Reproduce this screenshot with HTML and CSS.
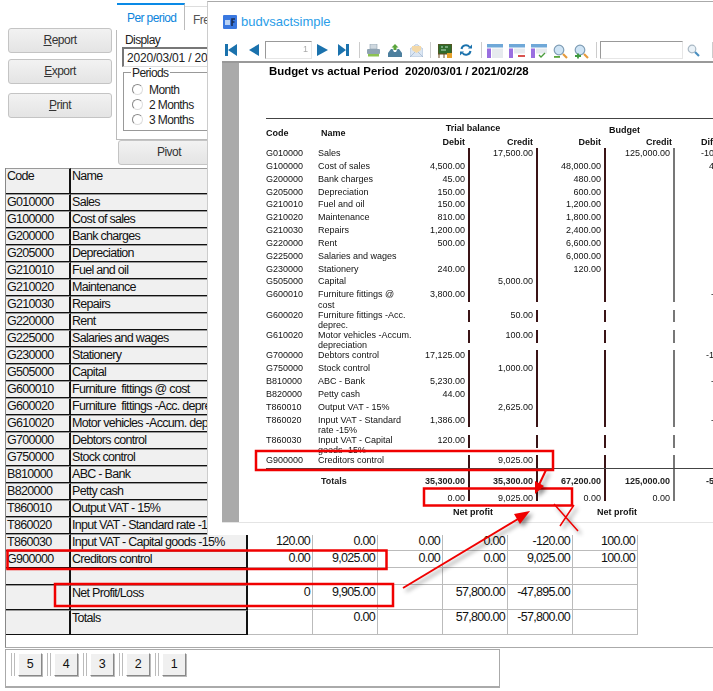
FILE: index.html
```html
<!DOCTYPE html>
<html lang="en">
<head>
    <meta charset="UTF-8">
    <title>Budget vs actual</title>
    <link rel="stylesheet" href="styles.css">
</head>
<body>
    <div class="top">
        <div class="side">
            <button class="btn"><u>R</u>eport</button>
            <button class="btn"><u>E</u>xport</button>
            <button class="btn btn-print"><u>P</u>rint</button>
        </div>
        <div class="tabs">
            <div class="tabrow">
                <div class="tab active">Per period</div>
                <div class="tab">Free</div>
            </div>
            <div class="panel">
                <div class="lbl">Display</div>
                <div class="field">2020/03/01 / 2021/02/28</div>
                <div class="group">
                    <div class="legend">Periods</div>
                    <div class="opt"><span class="radio"></span>Month</div>
                    <div class="opt"><span class="radio"></span>2 Months</div>
                    <div class="opt"><span class="radio"></span>3 Months</div>
                </div>
            </div>
            <button class="btn btn-pivot">Pivot</button>
        </div>
    </div>

    <div class="gridwrap">
        <table class="grid">
            <colgroup>
                <col class="c-code"><col class="c-name"><col class="c-num"><col class="c-num"><col class="c-num"><col class="c-num"><col class="c-num"><col class="c-num">
            </colgroup>
            <tr class="head"><th>Code</th><th>Name</th></tr>
            <tr><th>G010000</th><th>Sales</th></tr>
            <tr><th>G100000</th><th>Cost of sales</th></tr>
            <tr><th>G200000</th><th>Bank charges</th></tr>
            <tr><th>G205000</th><th>Depreciation</th></tr>
            <tr><th>G210010</th><th>Fuel and oil</th></tr>
            <tr><th>G210020</th><th>Maintenance</th></tr>
            <tr><th>G210030</th><th>Repairs</th></tr>
            <tr><th>G220000</th><th>Rent</th></tr>
            <tr><th>G225000</th><th>Salaries and wages</th></tr>
            <tr><th>G230000</th><th>Stationery</th></tr>
            <tr><th>G505000</th><th>Capital</th></tr>
            <tr><th>G600010</th><th>Furniture&nbsp; fittings @ cost</th></tr>
            <tr><th>G600020</th><th>Furniture&nbsp; fittings -Acc. deprec.</th></tr>
            <tr><th>G610020</th><th>Motor vehicles -Accum. depreciation</th></tr>
            <tr><th>G700000</th><th>Debtors control</th></tr>
            <tr><th>G750000</th><th>Stock control</th></tr>
            <tr><th>B810000</th><th>ABC - Bank</th></tr>
            <tr><th>B820000</th><th>Petty cash</th></tr>
            <tr><th>T860010</th><th>Output VAT - 15%</th></tr>
            <tr><th>T860020</th><th>Input VAT - Standard rate -15%</th></tr>
            <tr><th>T860030</th><th>Input VAT - Capital goods -15%</th><td>120.00</td><td>0.00</td><td>0.00</td><td>0.00</td><td>-120.00</td><td>100.00</td></tr>
            <tr><th>G900000</th><th>Creditors control</th><td>0.00</td><td>9,025.00</td><td>0.00</td><td>0.00</td><td>9,025.00</td><td>100.00</td></tr>
            <tr><th></th><th></th><td></td><td></td><td></td><td></td><td></td><td></td></tr>
            <tr class="tall"><th></th><th>Net Profit/Loss</th><td>0</td><td>9,905.00</td><td></td><td>57,800.00</td><td>-47,895.00</td><td></td></tr>
            <tr class="tall"><th></th><th>Totals</th><td></td><td>0.00</td><td></td><td>57,800.00</td><td>-57,800.00</td><td></td></tr>
        </table>
    </div>

    <div class="pager">
        <div class="pagebtn">5</div>
        <div class="pagebtn">4</div>
        <div class="pagebtn">3</div>
        <div class="pagebtn">2</div>
        <div class="pagebtn">1</div>
    </div>

    <!-- report preview window -->
    <div class="win">
        <div class="wintitle">
            <svg width="14" height="14" viewBox="0 0 14 14"><rect width="14" height="14" rx="1" fill="#3a78e0"/><rect x="2" y="5" width="5" height="5" fill="#b9d2f5"/><path d="M9 11V4h3M9 7h2.500" stroke="#1c2f55" stroke-width="1.600" fill="none"/></svg>
            <span>budvsactsimple</span>
        </div>
        <div class="tools">
            <svg class="ic first" width="12" height="12" viewBox="0 0 12 12"><path d="M0 0h3v12H0zM3 6l9-6v12z" fill="#1b72ad"/></svg>
            <svg class="ic prev" width="10" height="12" viewBox="0 0 10 12"><path d="M0 6l10-6v12z" fill="#1b72ad"/></svg>
            <div class="pageno">1</div>
            <svg class="ic next" width="11" height="12" viewBox="0 0 11 12"><path d="M11 6L0 0v12z" fill="#1b72ad"/></svg>
            <svg class="ic last" width="11" height="12" viewBox="0 0 11 12"><path d="M11 0H8v12h3zM8 6L0 0v12z" fill="#1b72ad"/></svg>
            <i class="sep s1"></i>
            <svg class="ic print" width="13" height="13" viewBox="0 0 13 13"><rect x="3" y="0" width="7" height="5" fill="#cfd8df" stroke="#8fa3b2" stroke-width=".6"/><rect x="0" y="5" width="13" height="5" rx="1" fill="#8fa3b2"/><rect x="1" y="10" width="11" height="2.500" fill="#8cc152"/></svg>
            <svg class="ic save" width="14" height="13" viewBox="0 0 14 13"><path d="M7 0l3.500 3.500H8.500V6h-3V3.500H3.500z" fill="#5aa53c"/><path d="M3 5L0 9v4h14V9l-3-4H9.500L8 8H6L4.500 5z" fill="#4d7f9e"/></svg>
            <svg class="ic mail" width="13" height="13" viewBox="0 0 13 13"><path d="M0 5l6.500-5L13 5v8H0z" fill="#dbe6f3" stroke="#9db2cc" stroke-width=".6"/><path d="M2 2h9v4l-4.500 3L2 6z" fill="#f4d9a8"/><path d="M0 13l5-5M13 13L8 8" stroke="#9db2cc" stroke-width=".7"/></svg>
            <i class="sep s2"></i>
            <svg class="ic board" width="14" height="14" viewBox="0 0 14 14"><rect y="0" width="14" height="10" fill="#2f6b2c" stroke="#6b4a1e"/><path d="M3 3h2M7 3h3M3 6h5" stroke="#dfe" stroke-width=".8"/><path d="M1 10v4M6 10v4" stroke="#6b4a1e"/><rect x="9" y="9" width="5" height="5" fill="#e5a12c"/></svg>
            <svg class="ic refresh" width="12" height="12" viewBox="0 0 12 12"><path d="M1.500 5A4.500 4.500 0 0 1 9.500 3M10.500 7A4.500 4.500 0 0 1 2.500 9" stroke="#1b72ad" stroke-width="2" fill="none"/><path d="M8 4.500h4V.500zM4 7.500H0v4z" fill="#1b72ad"/></svg>
            <i class="sep s3"></i>
            <svg class="ic t1" width="16" height="14" viewBox="0 0 16 14"><rect width="16" height="3.500" fill="#6fa8d8"/><rect y="4.500" width="4" height="9.500" fill="#9a6fe0"/><rect x="5" y="4.500" width="11" height="9.500" fill="#e6eaee"/></svg>
            <svg class="ic t2" width="16" height="14" viewBox="0 0 16 14"><rect width="16" height="3.500" fill="#6fa8d8"/><rect y="4.500" width="4" height="9.500" fill="#9a6fe0"/><rect x="5" y="4.500" width="11" height="5" fill="#e6eaee"/><rect x="9" y="11" width="7" height="2" fill="#d9534f"/></svg>
            <svg class="ic t3" width="16" height="14" viewBox="0 0 16 14"><rect width="16" height="3.500" fill="#6fa8d8"/><rect y="4.500" width="4" height="9.500" fill="#9a6fe0"/><rect x="5" y="4.500" width="11" height="5" fill="#e6eaee"/><path d="M8 11l2 2 4-4" stroke="#4a9c3c" stroke-width="1.300" fill="none"/></svg>
            <svg class="ic z1" width="15" height="15" viewBox="0 0 15 15"><circle cx="6" cy="6" r="4.800" fill="#cfe4f5" stroke="#7f9db5" stroke-width="1.200"/><path d="M10 10l4 4" stroke="#e59a3c" stroke-width="2.200"/><rect x="1" y="12" width="6" height="1.800" fill="#5aa53c"/></svg>
            <svg class="ic z2" width="15" height="15" viewBox="0 0 15 15"><circle cx="6" cy="6" r="4.800" fill="#cfe4f5" stroke="#7f9db5" stroke-width="1.200"/><path d="M10 10l4 4" stroke="#e59a3c" stroke-width="2.200"/><path d="M1 12h6M4 9.500v5" stroke="#3f9a3f" stroke-width="1.800"/></svg>
            <i class="sep s4"></i>
            <div class="searchbox"></div>
            <svg class="ic look" width="13" height="13" viewBox="0 0 13 13"><circle cx="5" cy="5" r="3.800" fill="#eaf2f8" stroke="#a9b8c4" stroke-width="1.200"/><path d="M8 8l4 4" stroke="#4a8fc0" stroke-width="2.200"/></svg>
            <i class="sep s5"></i>
        </div>
        <div class="preview">
            <div class="rail"></div>
            <div class="page">
                <div class="rtitle">Budget vs actual Period&nbsp; 2020/03/01 / 2021/02/28</div>
                <div class="rhead">
                    <b class="hcode">Code</b>
                    <b class="hname">Name</b>
                    <b class="htrial">Trial balance</b>
                    <b class="hbud">Budget</b>
                    <b class="hd hd1">Debit</b>
                    <b class="hd hd2">Credit</b>
                    <b class="hd hd3">Debit</b>
                    <b class="hd hd4">Credit</b>
                    <b class="hdiff">Difference</b>
                </div>
                <div class="rr"><span>G010000</span><span>Sales</span><span class="am"></span><span class="am">17,500.00</span><span class="am"></span><span class="am">125,000.00</span><span class="df">-107,500.00</span></div>
                <div class="rr"><span>G100000</span><span>Cost of sales</span><span class="am">4,500.00</span><span class="am"></span><span class="am">48,000.00</span><span class="am"></span><span class="df">43,500.00</span></div>
                <div class="rr"><span>G200000</span><span>Bank charges</span><span class="am">45.00</span><span class="am"></span><span class="am">480.00</span><span class="am"></span><span class="df">435.00</span></div>
                <div class="rr"><span>G205000</span><span>Depreciation</span><span class="am">150.00</span><span class="am"></span><span class="am">600.00</span><span class="am"></span><span class="df">450.00</span></div>
                <div class="rr"><span>G210010</span><span>Fuel and oil</span><span class="am">150.00</span><span class="am"></span><span class="am">1,200.00</span><span class="am"></span><span class="df">1,050.00</span></div>
                <div class="rr"><span>G210020</span><span>Maintenance</span><span class="am">810.00</span><span class="am"></span><span class="am">1,800.00</span><span class="am"></span><span class="df">990.00</span></div>
                <div class="rr"><span>G210030</span><span>Repairs</span><span class="am">1,200.00</span><span class="am"></span><span class="am">2,400.00</span><span class="am"></span><span class="df">1,200.00</span></div>
                <div class="rr"><span>G220000</span><span>Rent</span><span class="am">500.00</span><span class="am"></span><span class="am">6,600.00</span><span class="am"></span><span class="df warn">6,100.00</span></div>
                <div class="rr"><span>G225000</span><span>Salaries and wages</span><span class="am"></span><span class="am"></span><span class="am">6,000.00</span><span class="am"></span><span class="df warn">6,000.00</span></div>
                <div class="rr"><span>G230000</span><span>Stationery</span><span class="am">240.00</span><span class="am"></span><span class="am">120.00</span><span class="am"></span><span class="df">-120.00</span></div>
                <div class="rr"><span>G505000</span><span>Capital</span><span class="am"></span><span class="am">5,000.00</span><span class="am"></span><span class="am"></span><span class="df warn">5,000.00</span></div>
                <div class="rr"><span>G600010</span><span>Furniture fittings @<br>cost</span><span class="am">3,800.00</span><span class="am"></span><span class="am"></span><span class="am"></span><span class="df">-3,800.00</span></div>
                <div class="rr brk"><span>G600020</span><span>Furniture fittings -Acc.<br>deprec.</span><span class="am"></span><span class="am">50.00</span><span class="am"></span><span class="am"></span><span class="df"></span></div>
                <div class="rr brk"><span>G610020</span><span>Motor vehicles -Accum.<br>depreciation</span><span class="am"></span><span class="am">100.00</span><span class="am"></span><span class="am"></span><span class="df"></span></div>
                <div class="rr brk"><span>G700000</span><span>Debtors control</span><span class="am">17,125.00</span><span class="am"></span><span class="am"></span><span class="am"></span><span class="df">-17,125.00</span></div>
                <div class="rr"><span>G750000</span><span>Stock control</span><span class="am"></span><span class="am">1,000.00</span><span class="am"></span><span class="am"></span><span class="df"></span></div>
                <div class="rr"><span>B810000</span><span>ABC - Bank</span><span class="am">5,230.00</span><span class="am"></span><span class="am"></span><span class="am"></span><span class="df">-5,230.00</span></div>
                <div class="rr"><span>B820000</span><span>Petty cash</span><span class="am">44.00</span><span class="am"></span><span class="am"></span><span class="am"></span><span class="df"></span></div>
                <div class="rr"><span>T860010</span><span>Output VAT - 15%</span><span class="am"></span><span class="am">2,625.00</span><span class="am"></span><span class="am"></span><span class="df warn">2,625.00</span></div>
                <div class="rr"><span>T860020</span><span>Input VAT - Standard<br>rate -15%</span><span class="am">1,386.00</span><span class="am"></span><span class="am"></span><span class="am"></span><span class="df">-1,386.00</span></div>
                <div class="rr brk"><span>T860030</span><span>Input VAT - Capital<br>goods -15%</span><span class="am">120.00</span><span class="am"></span><span class="am"></span><span class="am"></span><span class="df"></span></div>
                <div class="rr brk"><span>G900000</span><span>Creditors control</span><span class="am"></span><span class="am">9,025.00</span><span class="am"></span><span class="am"></span><span class="df warn">9,025.00</span></div>
                <div class="rr totals"><span></span><b class="tname">Totals</b><b class="am">35,300.00</b><b class="am">35,300.00</b><b class="am">67,200.00</b><b class="am">125,000.00</b><b class="df">-57,800.00</b></div>
                <div class="rr zero"><span></span><span></span><span class="am">0.00</span><span class="am">9,025.00</span><span class="am">0.00</span><span class="am">0.00</span><span class="df"></span></div>
                <div class="rnet"><b class="net1">Net profit</b><b class="net2">Net profit</b></div>
            </div>
        </div>
    </div>

    <!-- red markup drawn over the screenshot -->
    <svg class="marks" width="713" height="691" viewBox="0 0 713 691">
        <g fill="none" stroke="#f00000" stroke-width="2.500">
            <rect x="256" y="451" width="297" height="19"/>
            <rect x="424" y="488.500" width="148" height="17"/>
            <rect x="7.500" y="550.500" width="379" height="18.500"/>
            <rect x="55" y="584" width="338" height="22"/>
        </g>
        <g class="shadow">
            <path d="M546 470L538 487" stroke="#f00000" stroke-width="2" fill="none"/>
            <path d="M535 494L535 481L544 486z" fill="#f00000"/>
            <path d="M403 588L518 519" stroke="#f00000" stroke-width="2" fill="none"/>
            <path d="M530 511L514 514L520 524z" fill="#f00000"/>
            <path d="M554 504L578 531M574 505L560 526" stroke="#f00000" stroke-width="1.500" fill="none"/>
        </g>
    </svg>
</body>
</html>
```
FILE: styles.css
```css
html, body {
    margin: 0;
    padding: 0;
    height: 691px;
    overflow: hidden;
    background: #fff;
    font-family: "Liberation Sans", Arial, sans-serif;
    font-size: 12px;
    color: #222;
}

.top {
    display: flex;
    height: 168px;
    letter-spacing: -.6px;
}
.side {
    display: flex;
    flex-direction: column;
    width: 104px;
    margin: 28px 4px 0 8px;
}
.btn {
    box-sizing: border-box;
    height: 25px;
    margin: 0 0 6px;
    padding: 0 0 2px;
    border: 1px solid #c4c4c4;
    border-radius: 3px;
    background: linear-gradient(#f2f2f2, #e4e4e4);
    font: 12px "Liberation Sans", Arial, sans-serif;
    letter-spacing: -.5px;
    color: #333;
}
.btn-print {
    margin-top: 3px;
}
.btn-pivot {
    display: block;
    width: 102px;
    margin: 0 0 0 2px;
}
.tabs {
    width: 200px;
    padding-top: 3px;
}
.tabrow {
    display: flex;
    height: 27px;
}
.tab {
    box-sizing: border-box;
    height: 24px;
    margin-top: 3px;
    padding: 6px 0 0 8px;
    width: 60px;
    color: #555;
    border-top: 1px solid #ddd;
}
.tab.active {
    width: 68px;
    height: 27px;
    margin: 0 0 0 1px;
    padding: 6px 0 0 10px;
    border-top: 2px solid #0a8ae6;
    border-right: 1px solid #bbb;
    color: #0a84dc;
}
.panel {
    box-sizing: border-box;
    height: 110px;
    padding: 3px 0 0 5px;
    border-left: 1px solid #bbb;
    border-bottom: 1px solid #bbb;
}
.lbl {
    height: 14px;
    padding-left: 3px;
    line-height: 14px;
}
.field {
    box-sizing: border-box;
    height: 20px;
    margin-top: 0;
    padding: 2px 0 0 3px;
    border: 1px solid #ddd;
    border-top: 2px solid #777;
    border-left: 2px solid #777;
    white-space: nowrap;
    overflow: hidden;
    letter-spacing: -.2px;
}
.group {
    box-sizing: border-box;
    height: 59px;
    margin: 5px 0 0 1px;
    padding: 9px 0 0 8px;
    border: 1px solid #999;
    position: relative;
}
.legend {
    position: absolute;
    top: -6px;
    left: 7px;
    padding: 0 1px;
    background: #fff;
    line-height: 13px;
}
.opt {
    display: flex;
    align-items: center;
    height: 15px;
}
.radio {
    box-sizing: border-box;
    width: 11px;
    height: 11px;
    margin-right: 6px;
    border: 1px solid #888;
    border-right-color: #ddd;
    border-bottom-color: #ddd;
    border-radius: 50%;
}

.gridwrap {
    box-sizing: border-box;
    height: 480px;
    margin-left: 5px;
    border-left: 1px solid #888;
    border-bottom: 1px solid #aaa;
}
.grid {
    table-layout: fixed;
    width: 632px;
    border-spacing: 0;
    font-size: 12.500px;
    letter-spacing: -.7px;
    line-height: 15px;
}
.c-code { width: 65px; }
.c-name { width: 177px; }
.c-num { width: 65px; }
.grid th, .grid td {
    box-sizing: border-box;
    height: 17px;
    padding: 0 2px 0 1px;
    vertical-align: top;
    white-space: nowrap;
    overflow: hidden;
    font-weight: normal;
}
.grid th {
    text-align: left;
    background: #f0f0f0;
    color: #111;
    border-top: 1px solid #999;
    border-bottom: 1px solid #111;
    border-right: 2px solid #111;
}
.grid td {
    text-align: right;
    color: #111;
    border-right: 1px solid #bbb;
    border-bottom: 1px solid #bbb;
}
.grid .head th { height: 26px; }
.grid .tall th, .grid .tall td { height: 25px; }

.pager {
    box-sizing: border-box;
    display: flex;
    width: 495px;
    height: 39px;
    margin: 1px 0 0 5px;
    padding-top: 3px;
    border: 1px solid #aaa;
    border-bottom-width: 2px;
}
.pagebtn {
    position: relative;
    box-sizing: border-box;
    width: 24px;
    height: 23px;
    margin: 0 0 0 12px;
    text-align: center;
    font-size: 12.500px;
    letter-spacing: -.7px;
    line-height: 21px;
    color: #111;
    background: #f0f0f0;
    border: 1px solid #fff;
    border-right: 1px solid #888;
    border-bottom: 1px solid #888;
    box-shadow: 1px 1px 0 #bbb;
}
.pagebtn::before {
    content: "";
    position: absolute;
    top: -1px;
    left: -8px;
    width: 2px;
    height: 23px;
    border-left: 1px solid #bbb;
    border-right: 1px solid #bbb;
}

.win {
    position: absolute;
    top: 1px;
    left: 207px;
    width: 506px;
    height: 533px;
    overflow: hidden;
    background: #fff;
    border-top: 1px solid #aaa;
    border-left: 1px solid #ccc;
}
.wintitle {
    display: flex;
    align-items: center;
    height: 39px;
    padding: 0 0 0 15px;
    box-sizing: border-box;
    font-size: 13px;
    color: #2a9de8;
}
.wintitle span {
    margin-left: 4px;
}
.tools {
    position: relative;
    height: 20px;
    filter: blur(.3px);
}
.ic {
    position: absolute;
    top: 3px;
}
.first { left: 17px; }
.prev { left: 41px; }
.next { left: 109px; }
.last { left: 130px; }
.print { left: 159px; }
.save { left: 180px; }
.mail { left: 202px; }
.board { left: 230px; }
.refresh { left: 252px; }
.t1 { left: 279px; }
.t2 { left: 301px; }
.t3 { left: 323px; }
.z1 { left: 345px; }
.z2 { left: 366px; }
.look { left: 479px; }
.pageno, .searchbox {
    position: absolute;
    top: 0;
    box-sizing: border-box;
    height: 18px;
    border: 1px solid #e6e6e6;
    border-top: 1px solid #999;
    border-left: 1px solid #999;
    font-size: 9px;
    line-height: 15px;
    text-align: right;
    padding-right: 3px;
    color: #aaa;
}
.pageno { left: 57px; width: 47px; }
.searchbox { left: 392px; width: 83px; }
.sep {
    position: absolute;
    top: 1px;
    width: 1px;
    height: 16px;
    background: #ccc;
}
.s1 { left: 151px; }
.s2 { left: 222px; }
.s3 { left: 273px; }
.s4 { left: 388px; }
.s5 { left: 504px; }

.preview {
    display: flex;
    box-sizing: border-box;
    height: 462px;
    margin-left: 14px;
    border-top: 2px solid #999;
    border-bottom: 1px solid #e4e4e4;
}
.rail {
    width: 17px;
    background: #aaa;
}
.page {
    flex: 1;
    min-width: 0;
    padding-left: 27px;
    overflow: hidden;
    font-size: 9px;
    line-height: 10.500px;
    color: #111;
    filter: blur(.25px);
}
.rtitle {
    box-sizing: border-box;
    height: 55px;
    padding: 1px 0 0 3px;
    font-size: 11.400px;
    line-height: 14px;
    font-weight: bold;
    color: #000;
    white-space: nowrap;
}
.rhead {
    display: grid;
    grid-template-columns: 52px 90px 62px 68px 68px 69px 74px;
    grid-template-rows: 17px 12px;
    height: 30px;
    box-sizing: border-box;
    border-top: 1px solid #444;
    margin-right: -60px;
    color: #111;
    line-height: 12px;
    white-space: nowrap;
}
.hcode { grid-area: 1 / 1 / 3 / 2; padding-top: 8px; }
.hname { grid-area: 1 / 2 / 3 / 3; padding: 8px 0 0 3px; }
.htrial { grid-area: 1 / 3 / 2 / 5; padding-top: 3px; text-align: center; }
.hbud { grid-area: 1 / 5 / 2 / 7; padding: 5px 0 0 71px; }
.hd { grid-row: 2; text-align: right; padding-right: 5px; }
.hd1 { grid-column: 3; }
.hd2 { grid-column: 4; }
.hd3 { grid-column: 5; }
.hd4 { grid-column: 6; padding-right: 3px; }
.hdiff { grid-area: 2 / 7; padding-left: 26px; }
.rr {
    display: grid;
    grid-template-columns: 52px 90px 62px 68px 68px 69px 74px;
    grid-template-rows: minmax(0, 1fr);
    height: 12.850px;
    margin-right: -60px;
    white-space: nowrap;
}
.rr.brk {
    margin-top: 7.500px;
}
.am {
    box-sizing: border-box;
    padding-right: 3px;
    text-align: right;
    border-right: 2px solid #3a1416;
}
.am:nth-child(6) {
    border-right-color: #777;
}
.df {
    text-align: right;
}
.warn {
    color: #f0b060;
}
.totals {
    box-sizing: border-box;
    height: 23px;
    border-top: 1px solid #444;
    color: #222;
}
.totals > * {
    padding-top: 7px;
}
.tname {
    padding-left: 3px;
}
.zero {
    height: 10px;
}
.zero > * {
    padding-top: 2px;
    box-sizing: border-box;
    height: 10px;
}
.rnet {
    display: grid;
    grid-template-columns: 142px 130px 137px;
    padding-top: 6px;
    color: #111;
}
.net1 { grid-column: 2; text-align: center; }
.net2 { grid-column: 3; padding-left: 59px; }

.marks {
    position: absolute;
    top: 0;
    left: 0;
    pointer-events: none;
}
.shadow {
    filter: drop-shadow(3px 3px 2px rgba(0, 0, 0, .45));
}
```
